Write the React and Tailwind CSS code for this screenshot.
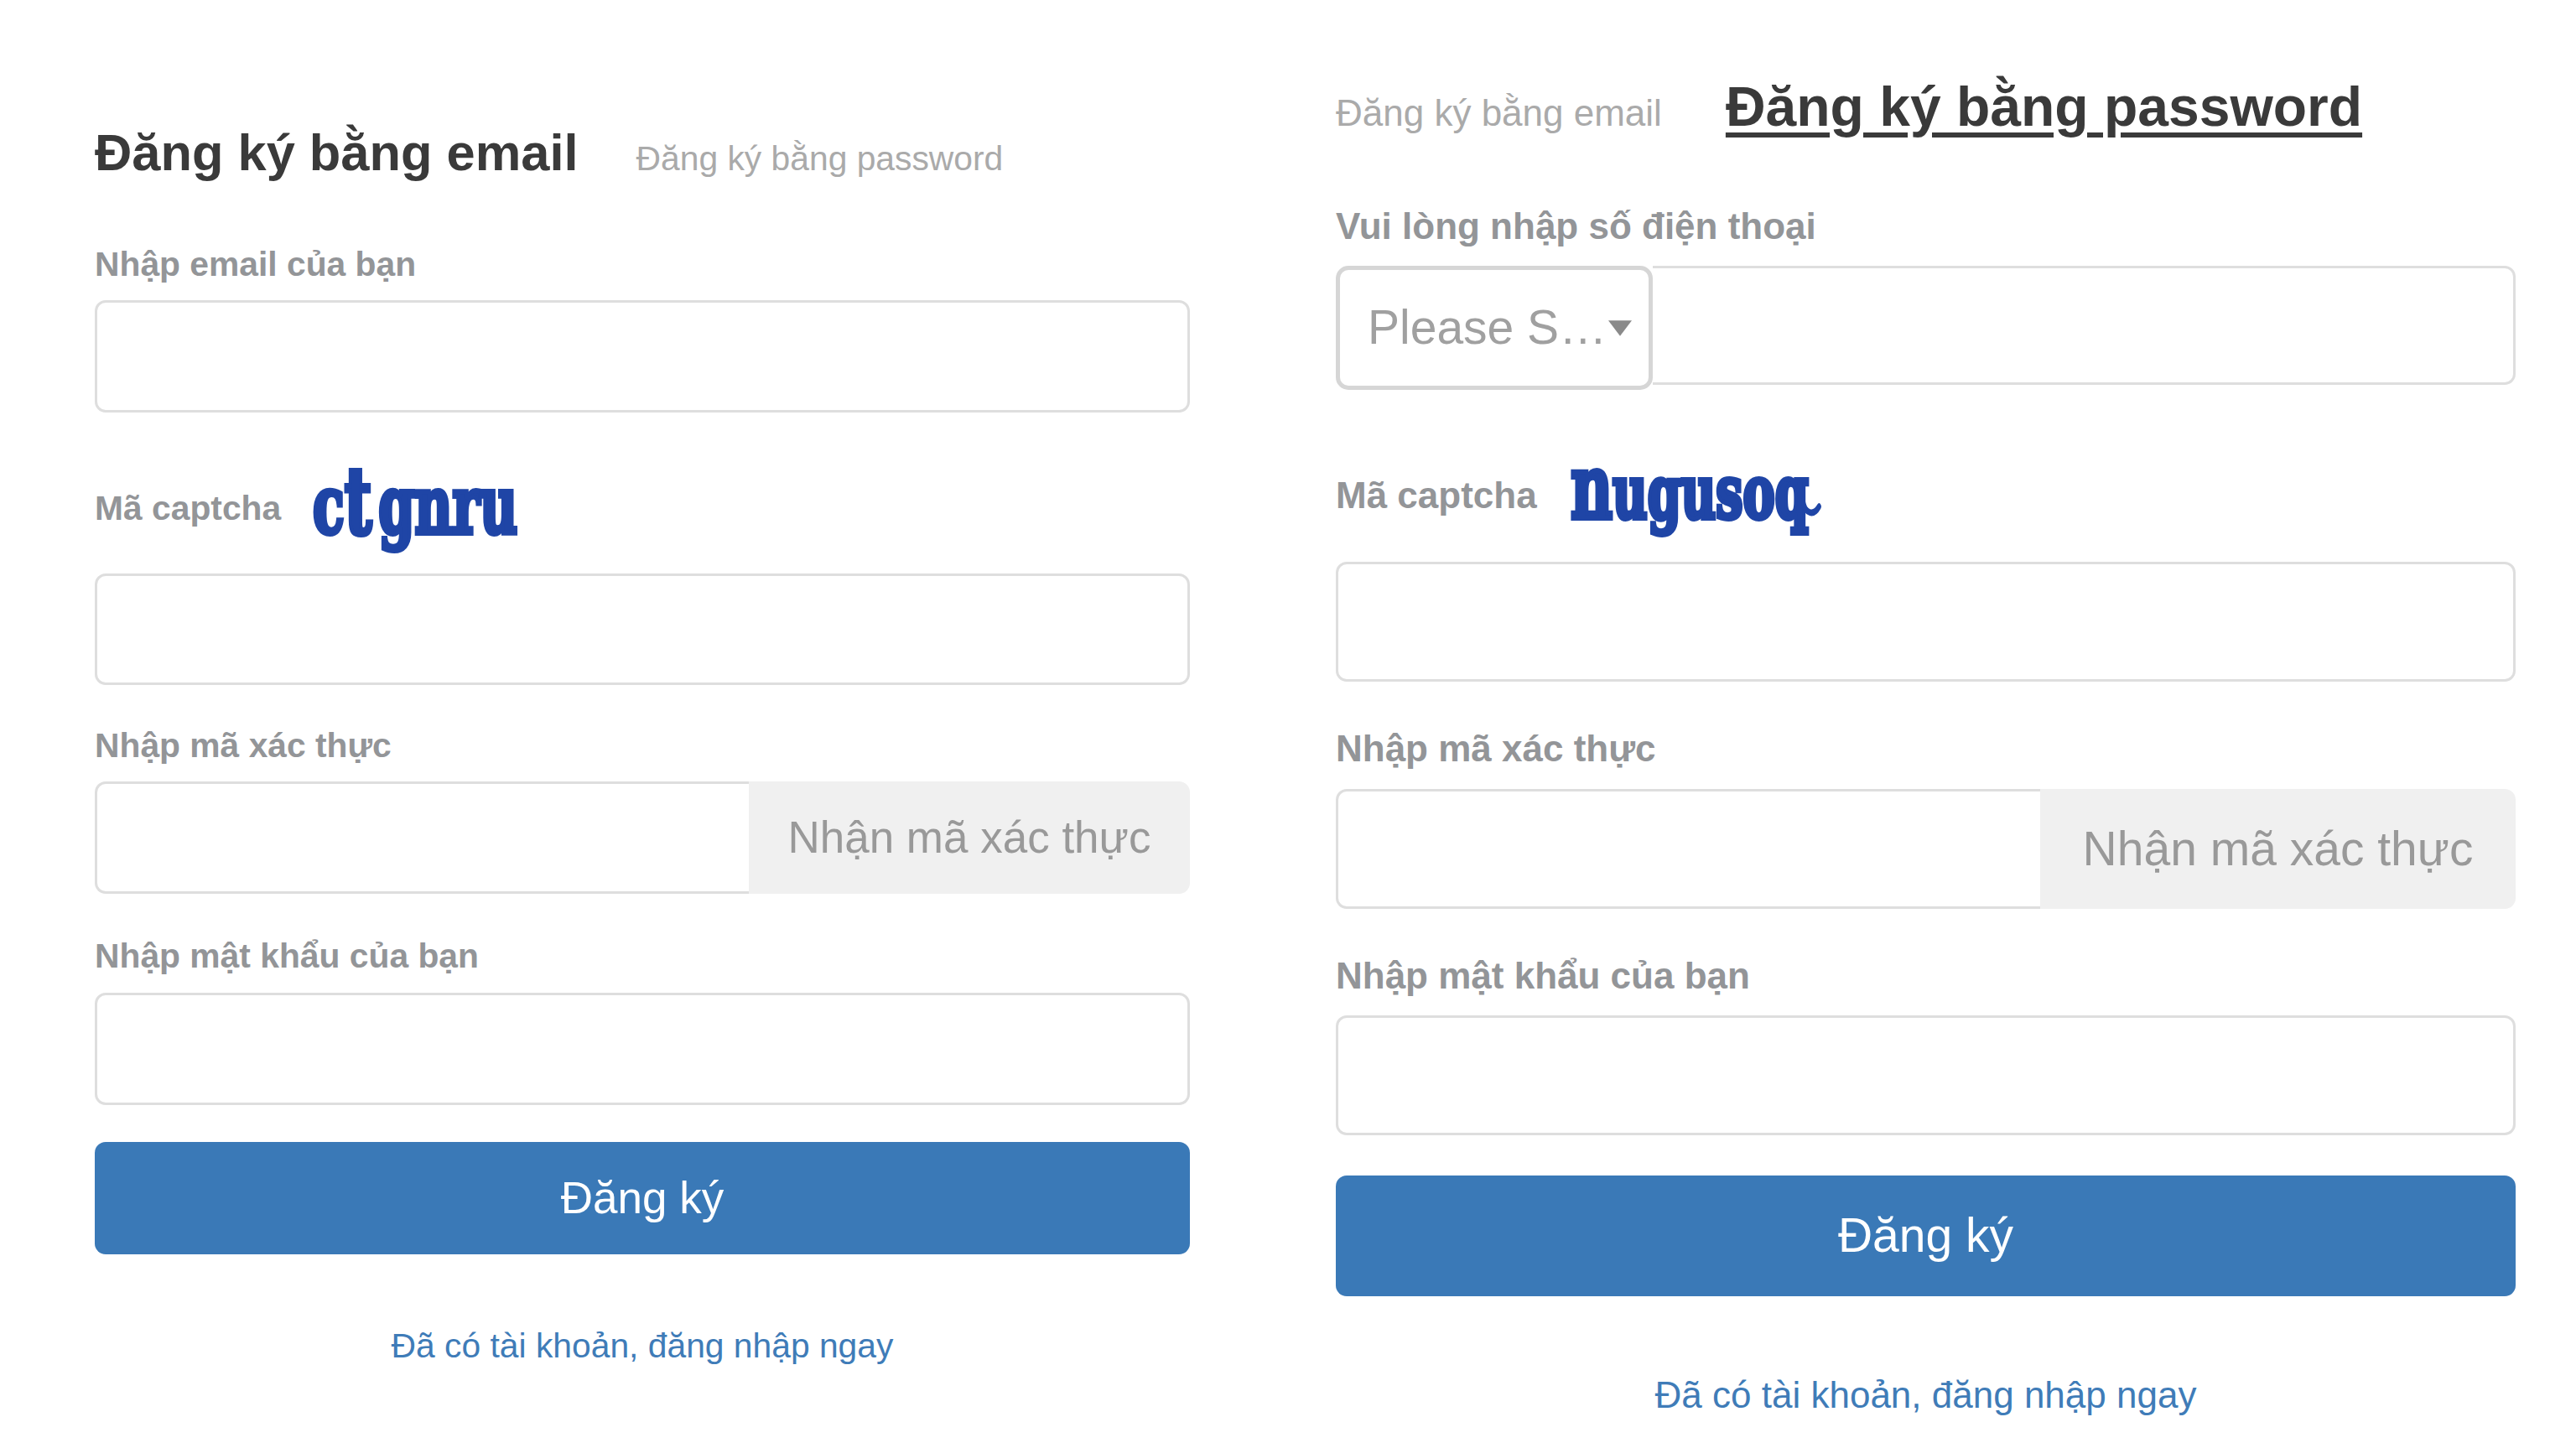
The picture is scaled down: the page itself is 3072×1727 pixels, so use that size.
const FONT = "font-['Liberation_Sans',Arial,sans-serif]";

function Captcha({ letters, className, children }) {
  return (
    <div className={`flex items-baseline origin-left font-['DejaVu_Serif',serif] font-bold text-[#1f45a6] [-webkit-text-stroke:6px_#1f45a6] select-none ${className}`}>
      {letters.map((l, i) => (
        <span key={i} className={`inline-block ${l.cls}`}>{l.ch}</span>
      ))}
      {children}
    </div>
  );
}

function Field({ className = "" }) {
  return (
    <input className={`block w-full bg-white border-[3px] border-[#dedede] rounded-[13px] outline-none ${className}`} />
  );
}

function CodeRow({ height, splitWidth, textSize }) {
  return (
    <div className={`flex w-full ${height}`}>
      <input className={`block h-full ${splitWidth} bg-white border-[3px] border-r-0 border-[#dedede] rounded-l-[13px] outline-none`} />
      <button className={`flex-1 h-full bg-[#f0f0f0] rounded-r-[13px] text-[#999999] ${textSize} whitespace-nowrap`}>
        Nhận mã xác thực
      </button>
    </div>
  );
}

function EmailForm() {
  return (
    <form className="w-[1306px] pt-[142px] shrink-0">
      <div className="flex items-baseline gap-[69px] h-[80px]">
        <h2 className="text-[61.4px] leading-[80px] font-bold text-[#3a3a3a]">Đăng ký bằng email</h2>
        <span className="text-[40.8px] text-[#aaaaaa]">Đăng ký bằng password</span>
      </div>
      <label className="block mt-[68px] h-[50px] leading-[50px] text-[40.8px] font-bold text-[#939598]">Nhập email của bạn</label>
      <Field className="mt-[18px] h-[134px]" />
      <div className="flex items-center gap-[38px] mt-[66px] h-[104px]">
        <span className="text-[40.8px] font-bold text-[#939598] -mt-[6px]">Mã captcha</span>
        <Captcha
          className="text-[96px] leading-[104px] scale-x-[0.645] -translate-y-[10px]"
          letters={[
            { ch: "c", cls: "" },
            { ch: "t", cls: "text-[110px] mr-[12px]" },
            { ch: "g", cls: "" },
            { ch: "n", cls: "" },
            { ch: "r", cls: "" },
            { ch: "u", cls: "" },
          ]}
        />
      </div>
      <Field className="mt-[22px] h-[133px]" />
      <label className="block mt-[47px] h-[50px] leading-[50px] text-[40.8px] font-bold text-[#939598]">Nhập mã xác thực</label>
      <div className="mt-[18px]">
        <CodeRow height="h-[134px]" splitWidth="w-[780px]" textSize="text-[53px]" />
      </div>
      <label className="block mt-[49px] h-[50px] leading-[50px] text-[40.8px] font-bold text-[#939598]">Nhập mật khẩu của bạn</label>
      <Field className="mt-[19px] h-[134px]" />
      <button type="button" className="block w-full mt-[44px] h-[134px] bg-[#3a79b7] rounded-[13px] text-white text-[53px]">Đăng ký</button>
      <a className="block mt-[84px] h-[50px] leading-[50px] text-center text-[40.8px] text-[#3f7cb8]">Đã có tài khoản, đăng nhập ngay</a>
    </form>
  );
}

function PhoneForm() {
  return (
    <form className="w-[1407px] ml-[174px] pt-[87px] shrink-0">
      <div className="flex items-baseline gap-[76px] h-[80px]">
        <span className="text-[44px] text-[#aaaaaa]">Đăng ký bằng email</span>
        <h2 className="text-[66px] leading-[80px] font-bold text-[#3a3a3a] underline decoration-[6px] underline-offset-[8px]">Đăng ký bằng password</h2>
      </div>
      <label className="block mt-[78px] h-[50px] leading-[50px] text-[44px] font-bold text-[#939598]">Vui lòng nhập số điện thoại</label>
      <div className="flex items-start mt-[22px] h-[148px]">
        <div className="flex items-center justify-between w-[378px] h-[148px] pl-[33px] pr-[20px] border-[5px] border-[#d6d6d6] rounded-[15px] bg-white shrink-0">
          <span className="text-[57px] text-[#a0a0a0] whitespace-nowrap">Please S…</span>
          <svg viewBox="0 0 24 16" className="w-[28px] h-[19px] shrink-0">
            <path d="M0 0 L24 0 L12 16 Z" fill="#8a8a8a" />
          </svg>
        </div>
        <input className="block flex-1 min-w-0 h-[142px] bg-white border-[3px] border-l-0 border-[#dedede] rounded-r-[13px] outline-none" />
      </div>
      <div className="flex items-center gap-[40px] mt-[91px] h-[85px]">
        <span className="text-[44px] font-bold text-[#939598] mb-[16px]">Mã captcha</span>
        <Captcha
          className="text-[88px] leading-[85px] scale-x-[0.65] -translate-y-[15px]"
          letters={[
            { ch: "n", cls: "text-[106px]" },
            { ch: "u", cls: "" },
            { ch: "g", cls: "" },
            { ch: "u", cls: "" },
            { ch: "s", cls: "" },
            { ch: "o", cls: "" },
            { ch: "q", cls: "" },
          ]}
        >
          <svg viewBox="0 0 40 30" className="w-[36px] h-[26px] -ml-[12px] -mb-[14px]">
            <path d="M2 6 C6 24 24 28 36 14" fill="none" stroke="#1f45a6" strokeWidth="9" strokeLinecap="round" />
          </svg>
        </Captcha>
      </div>
      <Field className="mt-[29px] h-[143px]" />
      <label className="block mt-[55px] h-[50px] leading-[50px] text-[44px] font-bold text-[#939598]">Nhập mã xác thực</label>
      <div className="mt-[23px]">
        <CodeRow height="h-[143px]" splitWidth="w-[840px]" textSize="text-[57px]" />
      </div>
      <label className="block mt-[55px] h-[50px] leading-[50px] text-[44px] font-bold text-[#939598]">Nhập mật khẩu của bạn</label>
      <Field className="mt-[22px] h-[143px]" />
      <button type="button" className="block w-full mt-[48px] h-[144px] bg-[#3a79b7] rounded-[13px] text-white text-[57px]">Đăng ký</button>
      <a className="block mt-[93px] h-[50px] leading-[50px] text-center text-[44px] text-[#3f7cb8]">Đã có tài khoản, đăng nhập ngay</a>
    </form>
  );
}

export default function App() {
  return (
    <div className={`flex w-[3072px] h-[1727px] pl-[113px] bg-white overflow-hidden ${FONT}`}>
      <EmailForm />
      <PhoneForm />
    </div>
  );
}
